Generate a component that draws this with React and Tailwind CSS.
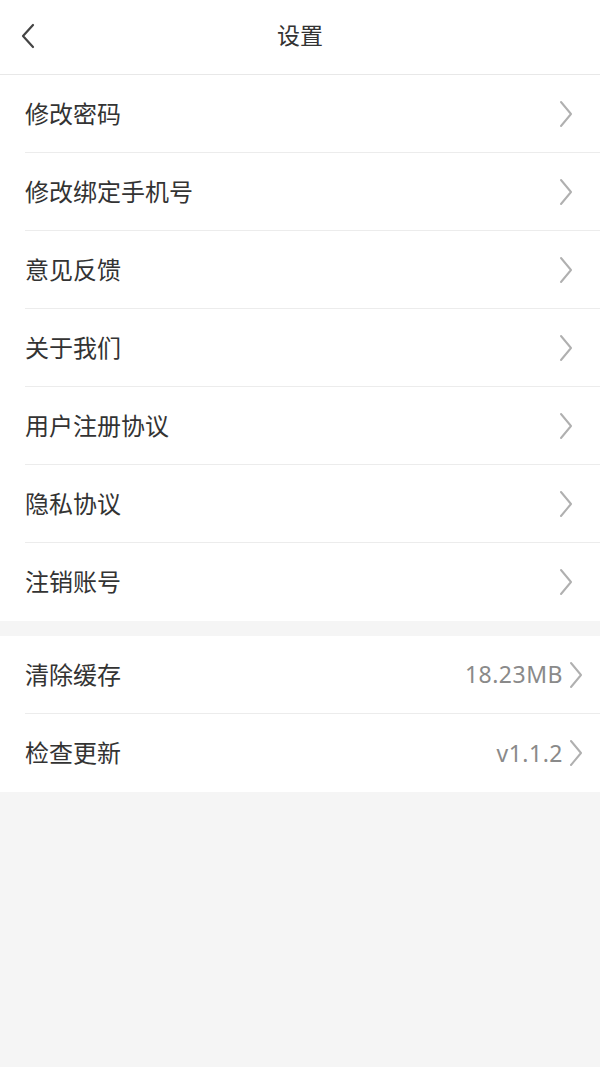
import React from "react";

const Chevron = ({ cls = "" }) => (
  <svg width="16" height="28" viewBox="0 0 16 28" className={cls}>
    <path d="M3 2 L13 14 L3 26" fill="none" stroke="#b0b0b0" strokeWidth="2" strokeLinecap="round" strokeLinejoin="round" />
  </svg>
);

const items = ["修改密码", "修改绑定手机号", "意见反馈", "关于我们", "用户注册协议", "隐私协议", "注销账号"];

function Row({ label, value, last }) {
  return (
    <div className="flex h-[78px] items-center pl-[25px]">
      <div className={`flex h-full flex-1 items-center ${value ? "pr-[16px]" : "pr-[26px]"} ${last ? "" : "border-b border-[#ececec]"}`}>
        <span className="flex-1 text-[24px] text-[#333333]">{label}</span>
        {value && <span className="mr-[5px] text-[23px] tracking-[0.5px] text-[#8a8a8a]">{value}</span>}
        <Chevron />
      </div>
    </div>
  );
}

export default function App() {
  return (
    <div
      className="min-h-[1067px] w-[600px] bg-[#f5f5f5]"
      style={{ fontFamily: '"Noto Sans", "Noto Sans CJK SC", sans-serif' }}
    >
      <div className="relative flex h-[75px] items-center justify-center border-b border-[#e8e8e8] bg-white pb-[4px]">
        <svg width="16" height="26" viewBox="0 0 16 26" className="absolute left-[20px] top-[23px]">
          <path d="M13 2 L3 13 L13 24" fill="none" stroke="#444" strokeWidth="2.2" strokeLinecap="round" strokeLinejoin="round" />
        </svg>
        <span className="text-[23px] text-[#333333]">设置</span>
      </div>
      <div className="bg-white">
        {items.map((t, i) => (
          <Row key={t} label={t} last={i === items.length - 1} />
        ))}
      </div>
      <div className="mt-[15px] bg-white">
        <Row label="清除缓存" value="18.23MB" />
        <Row label="检查更新" value="v1.1.2" last />
      </div>
    </div>
  );
}
